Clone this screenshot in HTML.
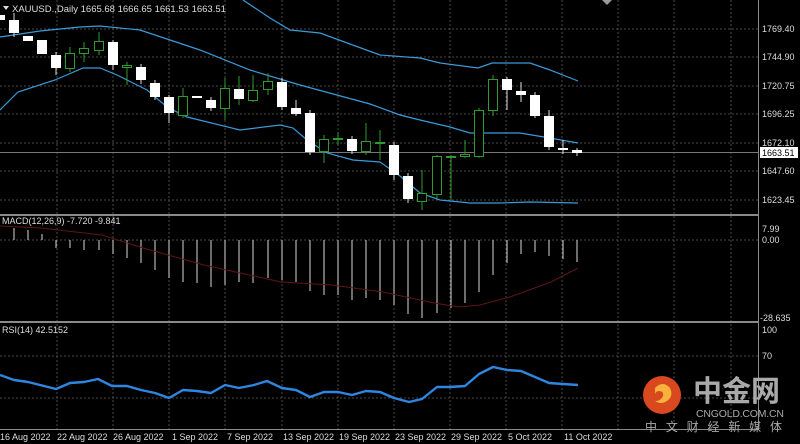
<!DOCTYPE html>
<html><head><meta charset="utf-8"><style>
html,body{margin:0;padding:0;background:#000;width:800px;height:444px;overflow:hidden}
svg{display:block}
text{font-family:"Liberation Sans","Noto Sans CJK SC",sans-serif}
</style></head><body>
<svg width="800" height="444" viewBox="0 0 800 444" xmlns="http://www.w3.org/2000/svg">
<rect width="800" height="444" fill="#000"/>
<!-- grid -->
<g stroke="#4a4a4a" stroke-width="1" stroke-dasharray="2,2">
<line x1="57" y1="0" x2="57" y2="430"/><line x1="113" y1="0" x2="113" y2="430"/><line x1="169" y1="0" x2="169" y2="430"/><line x1="225" y1="0" x2="225" y2="430"/><line x1="282" y1="0" x2="282" y2="430"/><line x1="338" y1="0" x2="338" y2="430"/><line x1="394" y1="0" x2="394" y2="430"/><line x1="450" y1="0" x2="450" y2="430"/><line x1="506" y1="0" x2="506" y2="430"/><line x1="562" y1="0" x2="562" y2="430"/><line x1="618" y1="0" x2="618" y2="430"/><line x1="674" y1="0" x2="674" y2="430"/><line x1="731" y1="0" x2="731" y2="430"/>
<line x1="0" y1="29" x2="758" y2="29"/><line x1="0" y1="57" x2="758" y2="57"/><line x1="0" y1="86" x2="758" y2="86"/><line x1="0" y1="114" x2="758" y2="114"/><line x1="0" y1="143" x2="758" y2="143"/><line x1="0" y1="171" x2="758" y2="171"/><line x1="0" y1="200" x2="758" y2="200"/>
<line x1="0" y1="240" x2="758" y2="240"/>
<line x1="0" y1="356" x2="758" y2="356"/><line x1="0" y1="398" x2="758" y2="398"/>
</g>
<line x1="0" y1="152.5" x2="758" y2="152.5" stroke="#777" stroke-width="1"/>
<!-- bollinger -->
<g fill="none" stroke="#3b9ad8" stroke-width="1.2">
<polyline points="243,0 270,18 290,30 320,33 380,55 420,58 440,63 478,68 492,63 530,63 550,70 578,81"/>
<polyline points="0,37 40,31 80,27 100,26 140,30 200,50 250,70 300,85 370,104 400,115 420,120 450,127 470,133 520,133 550,138 578,143"/>
<polyline points="0,110 18,92 55,80 83,68 100,68 117,75 147,90 167,107 187,117 240,130 280,125 293,128 307,140 327,153 353,160 380,162 400,176 420,193 440,200 470,203 500,203 530,202 578,203"/>
</g>
<!-- candles: wicks -->
<g stroke="#ddd" stroke-width="1">
<line x1="14" y1="13" x2="14" y2="37"/><line x1="56" y1="52" x2="56" y2="75"/><line x1="113" y1="40" x2="113" y2="70"/><line x1="141" y1="64" x2="141" y2="84"/><line x1="155" y1="80" x2="155" y2="100"/><line x1="169" y1="95" x2="169" y2="123"/><line x1="211" y1="97" x2="211" y2="111"/><line x1="282" y1="78" x2="282" y2="110"/><line x1="296" y1="100" x2="296" y2="116"/><line x1="310" y1="110" x2="310" y2="155"/><line x1="352" y1="136" x2="352" y2="154"/><line x1="394" y1="142" x2="394" y2="180"/><line x1="408" y1="173" x2="408" y2="203"/><line x1="507" y1="77" x2="507" y2="110"/><line x1="521" y1="82" x2="521" y2="102"/><line x1="535" y1="92" x2="535" y2="118"/><line x1="549" y1="110" x2="549" y2="150"/><line x1="563" y1="140" x2="563" y2="154"/><line x1="577" y1="148" x2="577" y2="156"/>
</g>
<g stroke="#2f9a2f" stroke-width="1">
<line x1="70" y1="47" x2="70" y2="72"/><line x1="84" y1="42" x2="84" y2="62"/><line x1="99" y1="32" x2="99" y2="55"/><line x1="127" y1="62" x2="127" y2="85"/><line x1="183" y1="88" x2="183" y2="118"/><line x1="225" y1="78" x2="225" y2="120"/><line x1="239" y1="76" x2="239" y2="105"/><line x1="253" y1="75" x2="253" y2="102"/><line x1="268" y1="73" x2="268" y2="95"/><line x1="324" y1="135" x2="324" y2="163"/><line x1="338" y1="132" x2="338" y2="145"/><line x1="366" y1="123" x2="366" y2="155"/><line x1="380" y1="130" x2="380" y2="160"/><line x1="422" y1="170" x2="422" y2="210"/><line x1="437" y1="155" x2="437" y2="200"/><line x1="451" y1="155" x2="451" y2="200"/><line x1="465" y1="140" x2="465" y2="158"/><line x1="479" y1="108" x2="479" y2="158"/><line x1="493" y1="75" x2="493" y2="116"/>
</g>
<g fill="#fff">
<rect x="-3" y="15" width="8" height="5"/><rect x="9" y="20" width="10" height="13"/><rect x="23" y="36" width="10" height="5"/><rect x="37" y="40" width="10" height="14"/><rect x="51" y="55" width="10" height="13"/><rect x="108" y="42" width="10" height="23"/><rect x="136" y="67" width="10" height="13"/><rect x="150" y="83" width="10" height="14"/><rect x="164" y="97" width="10" height="16"/><rect x="192" y="96" width="10" height="2"/><rect x="206" y="100" width="10" height="8"/><rect x="234" y="89" width="10" height="10"/><rect x="277" y="82" width="10" height="25"/><rect x="291" y="108" width="10" height="6"/><rect x="305" y="113" width="10" height="39"/><rect x="347" y="139" width="10" height="12"/><rect x="389" y="145" width="10" height="30"/><rect x="403" y="176" width="10" height="23"/><rect x="502" y="79" width="10" height="11"/><rect x="516" y="91" width="10" height="4"/><rect x="530" y="95" width="10" height="21"/><rect x="544" y="116" width="10" height="31"/><rect x="558" y="148" width="10" height="2"/><rect x="572" y="150" width="10" height="3"/>
</g>
<g fill="#000" stroke="#2f9a2f" stroke-width="1">
<rect x="65.5" y="53.5" width="9" height="15"/><rect x="79.5" y="48.5" width="9" height="5"/><rect x="94.5" y="41.5" width="9" height="9"/><rect x="122.5" y="65.5" width="9" height="2"/><rect x="178.5" y="96.5" width="9" height="19"/><rect x="220.5" y="88.5" width="9" height="20"/><rect x="248.5" y="90.5" width="9" height="10"/><rect x="263.5" y="81.5" width="9" height="8"/><rect x="319.5" y="139.5" width="9" height="12"/><rect x="333.5" y="138.5" width="9" height="1"/><rect x="361.5" y="141.5" width="9" height="10"/><rect x="375.5" y="142.5" width="9" height="1"/><rect x="417.5" y="193.5" width="9" height="8"/><rect x="432.5" y="156.5" width="9" height="38"/><rect x="446.5" y="156.5" width="9" height="1"/><rect x="460.5" y="154.5" width="9" height="2"/><rect x="474.5" y="110.5" width="9" height="46"/><rect x="488.5" y="79.5" width="9" height="31"/>
</g>
<!-- separators -->
<rect x="0" y="214" width="758" height="2" fill="#8a8a8a"/>
<rect x="0" y="321" width="758" height="2" fill="#8a8a8a"/>
<rect x="0" y="429" width="758" height="1" fill="#8a8a8a"/>
<line x1="758.5" y1="0" x2="758.5" y2="430" stroke="#8a8a8a"/>
<!-- MACD -->
<g stroke="#d8d8d8" stroke-width="1">
<line x1="14" y1="240" x2="14" y2="228"/><line x1="28" y1="240" x2="28" y2="230"/><line x1="42" y1="240" x2="42" y2="234"/>
<line x1="56" y1="240" x2="56" y2="248"/><line x1="70" y1="240" x2="70" y2="248"/><line x1="84" y1="240" x2="84" y2="250"/><line x1="99" y1="240" x2="99" y2="250"/><line x1="113" y1="240" x2="113" y2="254"/><line x1="127" y1="240" x2="127" y2="258"/><line x1="141" y1="240" x2="141" y2="263"/><line x1="155" y1="240" x2="155" y2="270"/><line x1="169" y1="240" x2="169" y2="278"/><line x1="183" y1="240" x2="183" y2="282"/><line x1="197" y1="240" x2="197" y2="283"/><line x1="211" y1="240" x2="211" y2="287"/><line x1="225" y1="240" x2="225" y2="285"/><line x1="239" y1="240" x2="239" y2="282"/><line x1="253" y1="240" x2="253" y2="283"/><line x1="268" y1="240" x2="268" y2="278"/><line x1="282" y1="240" x2="282" y2="280"/><line x1="296" y1="240" x2="296" y2="282"/><line x1="310" y1="240" x2="310" y2="291"/><line x1="324" y1="240" x2="324" y2="295"/><line x1="338" y1="240" x2="338" y2="295"/><line x1="352" y1="240" x2="352" y2="300"/><line x1="366" y1="240" x2="366" y2="298"/><line x1="380" y1="240" x2="380" y2="300"/><line x1="394" y1="240" x2="394" y2="305"/><line x1="408" y1="240" x2="408" y2="314"/><line x1="422" y1="240" x2="422" y2="318"/><line x1="437" y1="240" x2="437" y2="313"/><line x1="451" y1="240" x2="451" y2="308"/><line x1="465" y1="240" x2="465" y2="303"/><line x1="479" y1="240" x2="479" y2="292"/><line x1="493" y1="240" x2="493" y2="275"/><line x1="507" y1="240" x2="507" y2="263"/><line x1="521" y1="240" x2="521" y2="254"/><line x1="535" y1="240" x2="535" y2="252"/><line x1="549" y1="240" x2="549" y2="256"/><line x1="563" y1="240" x2="563" y2="259"/><line x1="577" y1="240" x2="577" y2="262"/>
</g>
<polyline fill="none" stroke="#5e1616" stroke-width="1" points="0,226 41,228 102,235 143,248 204,265 281,282 332,285 383,292 434,303 459,307 480,305 510,297 551,282 578,268"/>
<!-- RSI -->
<polyline fill="none" stroke="#2f86e0" stroke-width="2.4" stroke-linejoin="round" points="0,375 14,380 28,382 56,389 70,383 84,382 98,379 112,386 127,386 141,390 155,393 169,398 183,390 197,391 211,393 225,385 239,388 254,385 267,381 282,388 296,390 310,397 324,392 338,392 352,395 366,391 380,392 394,398 409,402 422,399 437,387 450,387 465,386 479,374 493,367 507,370 521,371 535,377 549,383 563,384 578,385"/>
<!-- labels -->
<g fill="#ddd" font-size="9">
<text x="12" y="12" font-size="9.5">XAUUSD.,Daily  1665.68 1666.65 1661.53 1663.51</text>
<path d="M3 6 L9 6 L6 10 Z" fill="#ddd"/>
<path d="M602 0 L612 0 L607 5 Z" fill="#999"/>
<text x="2" y="224">MACD(12,26,9) -7.720 -9.841</text>
<text x="2" y="333">RSI(14) 42.5152</text>
<text x="762" y="32">1769.40</text><text x="762" y="60">1744.90</text><text x="762" y="89">1720.75</text><text x="762" y="117">1696.25</text><text x="762" y="146">1672.10</text><text x="762" y="174">1647.60</text><text x="762" y="203">1623.45</text>
<text x="762" y="232">7.99</text><text x="762" y="243">0.00</text><text x="760" y="321">-28.635</text>
<text x="762" y="333">100</text><text x="762" y="359">70</text>
<text x="0" y="440">16 Aug 2022</text><text x="57" y="440">22 Aug 2022</text><text x="113" y="440">26 Aug 2022</text><text x="172" y="440">1 Sep 2022</text><text x="227" y="440">7 Sep 2022</text><text x="283" y="440">13 Sep 2022</text><text x="339" y="440">19 Sep 2022</text><text x="395" y="440">23 Sep 2022</text><text x="451" y="440">29 Sep 2022</text><text x="508" y="440">5 Oct 2022</text><text x="564" y="440">11 Oct 2022</text>
</g>
<rect x="760" y="147" width="38" height="11" fill="#fff"/>
<text x="762" y="156" font-size="9" fill="#000">1663.51</text>
<!-- logo -->
<circle cx="662" cy="395" r="19" fill="#d9481e"/>
<path d="M655 388 q8 -8 15 0 q4 8 -3 13 q-6 4 -12 0 q6 0 8 -5 q1 -5 -4 -5 q-3 0 -4 3 z" fill="#f6b23a"/>
<text x="693" y="401" font-size="29" font-weight="bold" fill="#a9a9a9" font-family="'Noto Serif CJK SC','Noto Sans CJK SC',serif">中金网</text>
<text x="696" y="417" font-size="10.5" fill="#a9a9a9" textLength="88">CNGOLD.COM.CN</text>
<text x="645" y="431" font-size="12" fill="#a9a9a9" textLength="137">中 文 财 经 新 媒 体</text>
</svg>
</body></html>
